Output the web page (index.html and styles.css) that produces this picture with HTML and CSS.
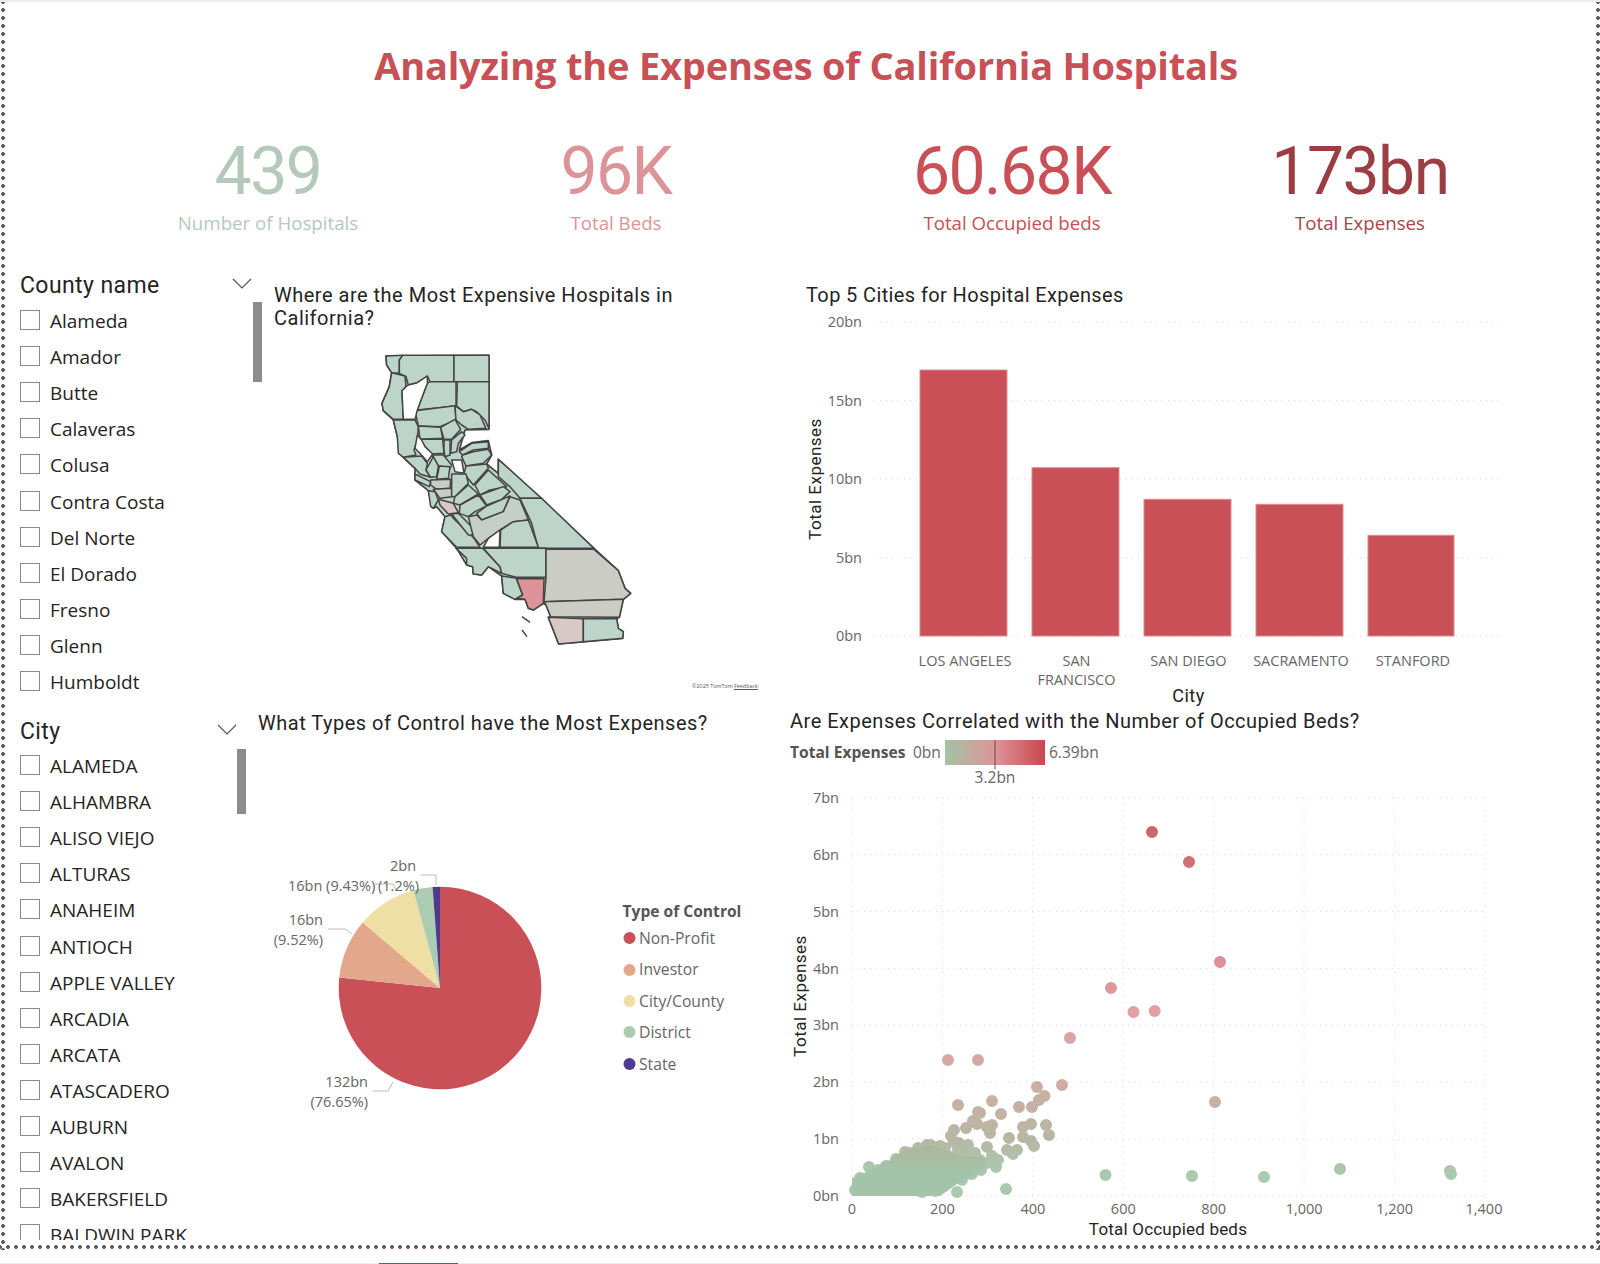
FILE: index.html
```html
<!DOCTYPE html>
<html lang="en">
<head>
<meta charset="utf-8">
<title>Analyzing the Expenses of California Hospitals</title>
<link rel="stylesheet" href="styles.css">
</head>
<body>
<main class="report">
  <h1 class="report-title">Analyzing the Expenses of California Hospitals</h1>

  <section class="kpis">
    <div class="kpi kpi-hospitals"><div class="kpi-value">439</div><div class="kpi-label">Number of Hospitals</div></div>
    <div class="kpi kpi-beds"><div class="kpi-value">96K</div><div class="kpi-label">Total Beds</div></div>
    <div class="kpi kpi-occupied"><div class="kpi-value">60.68K</div><div class="kpi-label">Total Occupied beds</div></div>
    <div class="kpi kpi-expenses"><div class="kpi-value">173bn</div><div class="kpi-label">Total Expenses</div></div>
  </section>

  <section class="row row-top">
    <aside class="slicer">
      <header class="slicer-head">
        <span>County name</span>
        <svg class="chevron" viewBox="0 0 20 11"><path d="M1 1l9 9 9-9"/></svg>
      </header>
      <ul class="slicer-list">
        <li><i class="box"></i>Alameda</li>
        <li><i class="box"></i>Amador</li>
        <li><i class="box"></i>Butte</li>
        <li><i class="box"></i>Calaveras</li>
        <li><i class="box"></i>Colusa</li>
        <li><i class="box"></i>Contra Costa</li>
        <li><i class="box"></i>Del Norte</li>
        <li><i class="box"></i>El Dorado</li>
        <li><i class="box"></i>Fresno</li>
        <li><i class="box"></i>Glenn</li>
        <li><i class="box"></i>Humboldt</li>
      </ul>
    </aside>

    <article class="panel panel-map">
      <i class="scrollbar scrollbar-county"></i>
      <h2 class="visual-title">Where are the Most Expensive Hospitals in California?</h2>
      <svg class="map" viewBox="0 0 960 960" role="img" aria-label="Map of California counties">
        <path class="state-outline" d="M138 48L447 46 447 268 375 270 358 330 395 308 445 302 455 345 440 372 475 400 475 358 762 625 835 692 855 745 872 760 850 778 838 832 830 836 835 865 850 875 848 895 656 912 625 832 632 830 618 795 610 790 580 810 565 805 555 778 525 778 490 760 485 708 445 680 425 705 400 702 398 680 380 675 350 625 305 575 315 530 290 500 280 505 265 452 225 420 225 385 190 352 172 290 160 240 130 212 126 190 148 140 155 98 140 75Z"/>
        <g class="county">
          <path d="M138 48L188 46 178 60 178 100 155 98 140 75Z"/>
          <path d="M188 46L342 46 342 125 270 125 262 108 232 128 205 135 198 110 178 100 178 60Z"/>
          <path d="M342 46L447 46 447 125 342 125Z"/>
          <path d="M155 98L195 108 198 140 186 152 190 238 160 238 130 212 126 190 148 140Z"/>
          <path d="M270 125L348 125 348 198 232 210 245 175 262 130Z"/>
          <path d="M352 125L447 125 447 265 435 240 410 215 395 208 370 215 350 198Z"/>
          <path d="M225 212L345 197 348 240 300 260 235 258Z"/>
          <path d="M345 197L370 215 395 208 420 225 438 265 385 268 365 255 348 240Z"/>
          <path d="M160 240L225 240 235 260 232 300 222 330 228 345 190 352 175 340 172 290Z"/>
          <path d="M235 258L302 262 308 295 240 298Z"/>
          <path d="M302 262L345 238 362 268 335 298 312 298Z"/>
          <path d="M240 298L308 298 312 340 275 342 255 320Z"/>
          <path d="M312 300L330 300 330 345 315 350 312 330Z"/>
          <path d="M335 300L365 275 375 285 355 310 350 335 332 340Z"/>
          <path d="M358 335L395 310 445 305 445 325 400 330 368 345Z"/>
          <path d="M368 345L400 335 445 328 455 345 430 370 378 378 365 350Z"/>
          <path d="M275 345L310 345 335 375 330 385 295 378Z"/>
          <path d="M190 352L245 348 262 370 258 390 272 412 240 402 225 385Z"/>
          <path d="M258 390L280 350 295 378 290 410 272 412Z"/>
          <path d="M378 378L440 372 445 385 400 435 380 410 372 400Z"/>
          <path d="M298 378L330 380 325 415 290 418Z"/>
          <path d="M225 402L272 425 268 440 225 420Z"/>
          <path class="county-mild" d="M272 420L332 418 330 445 290 448 272 435Z"/>
          <path class="county-warm" d="M280 448L335 445 335 470 300 475Z"/>
          <path d="M265 452L285 455 295 480 280 505 272 500Z"/>
          <path d="M335 402L378 402 385 430 345 470 335 470Z"/>
          <path d="M405 435L445 390 500 440 450 450 420 465Z"/>
          <path d="M345 470L385 435 415 462 360 495 340 490Z"/>
          <path d="M420 465L490 440 510 455 485 478 440 495Z"/>
          <path d="M360 495L415 465 440 498 405 515 385 530 358 520Z"/>
          <path d="M410 520L440 498 487 478 510 468 490 515 425 540Z"/>
          <path d="M475 358L605 475 540 475 510 440 475 410Z"/>
          <path d="M540 475L605 475 762 625 595 625 575 550Z"/>
          <path d="M315 530L332 525 345 540 400 592 420 622 350 622 305 575Z"/>
          <path d="M335 522L355 520 395 560 400 585 385 585Z"/>
          <path class="county-mild" d="M385 530L410 525 425 540 490 515 510 470 540 480 565 540 520 545 480 570 445 595 420 615 400 590Z"/>
          <path d="M482 570L520 545 565 540 595 622 480 622Z"/>
          <path d="M348 625L428 625 480 680 485 700 445 680 425 705 400 702 398 680 380 675 380 655Z"/>
          <path d="M430 625L618 625 618 712 528 712 485 700 480 680Z"/>
          <path class="county-warm" d="M618 628L762 628 835 692 855 745 872 760 850 778 612 785 618 712Z"/>
          <path d="M485 708L528 714 548 765 525 778 490 760Z"/>
          <path class="county-hot" d="M530 716L612 716 610 790 580 810 565 805 555 778 530 775 548 765Z"/>
          <path class="county-warm" d="M612 785L850 778 838 832 632 830 618 795Z"/>
          <path class="county-pink" d="M625 832L730 836 730 905 656 912Z"/>
          <path d="M730 836L830 836 835 865 850 875 848 895 730 905Z"/>
          <path class="county-pink" d="M295 478L340 490 355 518 325 522 300 495Z"/>
        </g>
        <g class="county-gap">
          <path d="M198 140L205 135 232 128 262 108 262 130 245 175 232 210 225 238 190 238 186 152Z"/>
          <path d="M232 285L245 300 255 320 278 342 262 365 240 340 225 325Z"/>
          <path d="M335 360L365 360 372 400 345 395Z"/>
          <path d="M445 595L480 570 478 622 430 622Z"/>
        </g>
        <path class="islands" d="M546 830L570 847M546 870L561 890"/>
      </svg>
      <div class="attribution">©2025 TomTom <u>Feedback</u></div>
    </article>

    <article class="panel panel-bars">
      <h2 class="visual-title">Top 5 Cities for Hospital Expenses</h2>
      <svg class="chart chart-bars" viewBox="780 307 820 400" role="img" aria-label="Column chart of total expenses by city">
        <g class="grid-line">
          <path d="M874 322H1500M874 400.6H1500M874 479H1500M874 557.6H1500M874 636H1500"/>
        </g>
        <g class="bar">
          <rect x="920" y="370" width="87" height="266"/>
          <rect x="1032" y="467.7" width="87" height="168.3"/>
          <rect x="1144" y="499.3" width="87" height="136.7"/>
          <rect x="1256" y="504.3" width="87" height="131.7"/>
          <rect x="1368" y="535.3" width="86" height="100.7"/>
        </g>
        <g class="tick tick-end">
          <text x="862" y="327">20bn</text>
          <text x="862" y="406">15bn</text>
          <text x="862" y="484">10bn</text>
          <text x="862" y="563">5bn</text>
          <text x="862" y="641">0bn</text>
        </g>
        <g class="tick tick-mid">
          <text x="965" y="666">LOS ANGELES</text>
          <text x="1076.5" y="666">SAN</text>
          <text x="1076.5" y="685">FRANCISCO</text>
          <text x="1188.5" y="666">SAN DIEGO</text>
          <text x="1301" y="666">SACRAMENTO</text>
          <text x="1413" y="666">STANFORD</text>
        </g>
        <text class="axis-title axis-city" x="1188.5" y="702">City</text>
        <text class="axis-title" transform="translate(821 479) rotate(-90)">Total Expenses</text>
      </svg>
    </article>
  </section>

  <section class="row row-bottom">
    <aside class="slicer slicer-city">
      <header class="slicer-head">
        <span>City</span>
        <svg class="chevron" viewBox="0 0 20 11"><path d="M1 1l9 9 9-9"/></svg>
      </header>
      <ul class="slicer-list">
        <li><i class="box"></i>ALAMEDA</li>
        <li><i class="box"></i>ALHAMBRA</li>
        <li><i class="box"></i>ALISO VIEJO</li>
        <li><i class="box"></i>ALTURAS</li>
        <li><i class="box"></i>ANAHEIM</li>
        <li><i class="box"></i>ANTIOCH</li>
        <li><i class="box"></i>APPLE VALLEY</li>
        <li><i class="box"></i>ARCADIA</li>
        <li><i class="box"></i>ARCATA</li>
        <li><i class="box"></i>ATASCADERO</li>
        <li><i class="box"></i>AUBURN</li>
        <li><i class="box"></i>AVALON</li>
        <li><i class="box"></i>BAKERSFIELD</li>
        <li><i class="box"></i>BALDWIN PARK</li>
      </ul>
    </aside>

    <article class="panel panel-pie">
      <i class="scrollbar scrollbar-city"></i>
      <h2 class="visual-title">What Types of Control have the Most Expenses?</h2>
      <svg class="chart chart-pie" viewBox="237 735 543 505" role="img" aria-label="Pie chart of expenses by type of control">
        <path class="slice-profit" d="M440 988L440 886.7A101.3 101.3 0 1 1 339.3 977.4Z"/>
        <path class="slice-investor" d="M440 988L339.3 977.4A101.3 101.3 0 0 1 362.7 922.5Z"/>
        <path class="slice-city" d="M440 988L362.7 922.5A101.3 101.3 0 0 1 413.4 890.2Z"/>
        <path class="slice-district" d="M440 988L413.4 890.2A101.3 101.3 0 0 1 432.6 887Z"/>
        <path class="slice-state" d="M440 988L432.6 887A101.3 101.3 0 0 1 440 886.7Z"/>
        <path class="leader" d="M421 875H436L436 885M328 929H345L352 934M375 884H393L397 891M373 1091H388L393 1082"/>
        <g class="tick">
          <text x="390" y="871">2bn</text>
          <text x="288" y="891">16bn (9.43%)</text>
          <text x="378" y="891">(1.2%)</text>
          <text class="anchor-end" x="323" y="925">16bn</text>
          <text class="anchor-end" x="323" y="945">(9.52%)</text>
          <text class="anchor-end" x="368" y="1087">132bn</text>
          <text class="anchor-end" x="368" y="1107">(76.65%)</text>
        </g>
        <text class="legend-title" x="622.5" y="917">Type of Control</text>
        <circle class="slice-profit" cx="629.5" cy="938" r="6"/>
        <circle class="slice-investor" cx="629.5" cy="970" r="6"/>
        <circle class="slice-city" cx="629.5" cy="1001" r="6"/>
        <circle class="slice-district" cx="629.5" cy="1032" r="6"/>
        <circle class="slice-state" cx="629.5" cy="1064" r="6"/>
        <g class="legend-item">
          <text x="639" y="944">Non-Profit</text>
          <text x="639" y="975">Investor</text>
          <text x="639" y="1007">City/County</text>
          <text x="639" y="1038">District</text>
          <text x="639" y="1070">State</text>
        </g>
      </svg>
    </article>

    <article class="panel panel-scatter">
      <h2 class="visual-title">Are Expenses Correlated with the Number of Occupied Beds?</h2>
      <svg class="chart chart-scatter" viewBox="780 732 820 508" role="img" aria-label="Scatter chart of expenses against occupied beds">
        <defs>
          <linearGradient id="legend-ramp">
            <stop offset="0" stop-color="#a3c4a3"/>
            <stop offset=".5" stop-color="#dd9499"/>
            <stop offset="1" stop-color="#c8474f"/>
          </linearGradient>
          <linearGradient id="heat" gradientUnits="userSpaceOnUse" x1="0" y1="832" x2="0" y2="1190">
            <stop offset="0" stop-color="#ca5760"/>
            <stop offset=".5" stop-color="#e0979c"/>
            <stop offset=".75" stop-color="#c4a99d"/>
            <stop offset=".86" stop-color="#b0b29c"/>
            <stop offset=".95" stop-color="#a3c4a8"/>
            <stop offset="1" stop-color="#a3c4a8"/>
          </linearGradient>
        </defs>
        <text class="legend-title" x="790" y="758">Total Expenses</text>
        <text class="tick-plain" x="913" y="758">0bn</text>
        <rect x="945" y="740" width="100" height="25" fill="url(#legend-ramp)"/>
        <path class="ramp-mark" d="M995 740V769"/>
        <text class="tick-plain" x="1049" y="758">6.39bn</text>
        <text class="tick-plain anchor-middle" x="995" y="783">3.2bn</text>
        <g class="grid-line">
          <path d="M852 797.7H1485M852 854.6H1485M852 911.4H1485M852 968.3H1485M852 1025H1485M852 1082H1485M852 1139H1485M852 1195.7H1485"/>
          <path d="M852 797.7V1195.7M942.4 797.7V1195.7M1032.9 797.7V1195.7M1123.3 797.7V1195.7M1213.7 797.7V1195.7M1304.1 797.7V1195.7M1394.6 797.7V1195.7M1485 797.7V1195.7"/>
        </g>
        <path class="cluster" d="M852 1196L852 1178 866 1172 890 1160 905 1150 930 1145 945 1150 958 1156 985 1157 985 1170 960 1182 940 1196Z"/>
        <path class="dots" d="M1152 832h0M1189 862h0M1220 962h0M1111 988h0M1133.5 1012h0M1154.7 1011h0M1070 1038h0M948 1060h0M978 1060h0M1062 1085h0M1037 1087h0M1215 1102h0M1044.5 1096h0M1039 1100h0M992 1101h0M958 1105h0M1019 1107h0M1032 1107h0M978 1112h0M980 1113h0M1001 1114h0M973 1121h0M977 1124h0M1031 1124h0M1046 1125h0M1023 1127h0M992 1125h0M987 1127h0M990 1133h0M954 1130h0M966 1128h0M1049 1135h0M1009 1138h0M1023 1137h0M951 1136h0M1031 1141h0M1034 1146h0M954 1142h0M959 1143h0M968 1145h0M987 1147h0M1007 1150h0M1017 1150h0M1013 1154h0M945 1148h0M970.5 1152h0M975 1153h0M992 1156h0M998 1160h0M996 1167h0M981 1170h0M987 1163h0M967 1174h0M957 1192h0M1006 1189h0M1105.5 1175h0M1192 1176h0M1264 1177h0M1340 1169h0M1450 1171h0M1451 1174h0M869 1167h0M905 1152h0M910 1153h0M927 1145h0M930.6 1145h0M918 1148h0M896 1159h0M886 1166h0M878 1170h0M860 1178h0M858 1184h0M855 1190h0M936 1152h0M948 1156h0M956 1158h0M962 1165h0M972 1163h0M955 1172h0M950 1180h0M942 1186h0M935 1191h0M922 1192h0M962 1180h0M972 1174h0M925 1160h0M938 1168h0M910 1170h0M895 1178h0M915 1180h0M880 1185h0M900 1190h0M868 1190h0M930 1178h0M914 1160h0M904 1163h0M932 1155h0M944 1162h0M952 1166h0M966 1158h0M980 1160h0M978 1166h0M970 1170h0M964 1174h0M946 1172h0M940 1178h0M958 1150h0M964 1148h0M940 1146h0"/>
        <g class="tick tick-end">
          <text x="839" y="803">7bn</text>
          <text x="839" y="860">6bn</text>
          <text x="839" y="916.5">5bn</text>
          <text x="839" y="973.5">4bn</text>
          <text x="839" y="1030">3bn</text>
          <text x="839" y="1087">2bn</text>
          <text x="839" y="1143.5">1bn</text>
          <text x="839" y="1200.5">0bn</text>
        </g>
        <g class="tick tick-mid">
          <text x="852" y="1214">0</text>
          <text x="942.4" y="1214">200</text>
          <text x="1032.9" y="1214">400</text>
          <text x="1123.3" y="1214">600</text>
          <text x="1213.7" y="1214">800</text>
          <text x="1304.1" y="1214">1,000</text>
          <text x="1394.6" y="1214">1,200</text>
          <text x="1484" y="1214">1,400</text>
        </g>
        <text class="axis-title axis-beds" x="1168" y="1235">Total Occupied beds</text>
        <text class="axis-title" transform="translate(806 996) rotate(-90)">Total Expenses</text>
      </svg>
    </article>
  </section>
</main>
<footer class="statusbar"><i class="active-tab"></i></footer>
</body>
</html>
```
FILE: styles.css
```css
* { box-sizing: border-box; }
html, body { margin: 0; padding: 0; background: #fff; }
body { width: 1600px; height: 1264px; overflow: hidden; font-family: "Open Sans", "Noto Sans", sans-serif; }

.report {
  height: 1250px;
  border-top: 2px solid #ececec;
  margin-bottom: 13px;
  background-image:
    radial-gradient(circle 2.2px at 4px 4px, #5f5f5f 75%, transparent 100%),
    radial-gradient(circle 2.2px at 4px 4px, #5f5f5f 75%, transparent 100%),
    radial-gradient(circle 2.2px at 4px 4px, #5f5f5f 75%, transparent 100%);
  background-size: 8px 8px;
  background-repeat: repeat-y, repeat-y, repeat-x;
  background-position: -1px 4px, 1594px 4px, 4px 1241px;
}

.report-title {
  margin: 0;
  height: 128px;
  padding-top: 36px;
  padding-left: 12px;
  text-align: center;
  font-size: 38px;
  line-height: 54px;
  letter-spacing: -.2px;
  font-weight: 700;
  color: #c85056;
}

.kpis { display: flex; gap: 48px; height: 140px; padding-left: 118px; }
.kpi { width: 300px; text-align: center; }
.kpi-occupied { margin-left: 48px; }
.kpi-value {
  font-family: Roboto, sans-serif;
  font-size: 66px;
  line-height: 76px;
  letter-spacing: -1.5px;
  margin-top: 4px;
}
.kpi-label { font-size: 18.7px; line-height: 24px; margin-top: 1px; }
.kpi-hospitals { color: #b5c9bb; }
.kpi-beds { color: #dd9499; }
.kpi-occupied { color: #c85056; }
.kpi-expenses { color: #9b3d42; }
.kpi-expenses .kpi-label { color: #a9444b; }

.row { display: grid; }
.row-top { grid-template-columns: 252px 528px 820px; height: 439px; }
.row-bottom { grid-template-columns: 237px 543px 820px; height: 531px; }

.slicer { padding-left: 20px; overflow: hidden; }
.slicer-city { padding-top: 7px; }
.slicer-head {
  display: flex;
  justify-content: space-between;
  align-items: center;
  height: 30px;
  font-family: Roboto, sans-serif;
  font-size: 23px;
  letter-spacing: .4px;
  color: #252423;
}
.chevron { width: 20px; height: 11px; margin-top: -4px; fill: none; stroke: #555; stroke-width: 1.2; }
.slicer-list { list-style: none; margin: 3px 0 0; padding: 0; }
.slicer-city .slicer-list { margin-top: 2px; }
.slicer-list li {
  display: flex;
  align-items: center;
  height: 36.1px;
  font-size: 19px;
  color: #252423;
  white-space: nowrap;
}
.box { width: 20px; height: 20px; margin-right: 10px; border: 1.5px solid #8a8a8a; flex: none; margin-top: -2px; }

.panel { position: relative; }
.panel-map { padding: 14px 0 0 22px; }
.panel-bars { padding: 14px 0 0 26px; }
.panel-pie { padding: 3px 0 0 21px; }
.panel-scatter { padding: 1px 0 0 10px; }
.panel-bars .chart { margin-left: -26px; }
.panel-scatter .chart { margin: -1px 0 0 -10px; }
.panel-pie .chart { margin-left: -21px; }
.scrollbar { position: absolute; width: 9px; background: #8c8c8c; }
.scrollbar-county { left: 1px; top: 32px; height: 80px; }
.scrollbar-city { left: 0; top: 40px; height: 65px; }

.visual-title {
  margin: 0;
  font-family: Roboto, sans-serif;
  font-size: 20px;
  line-height: 23px;
  font-weight: 400;
  letter-spacing: .5px;
  color: #252423;
  max-width: 430px;
}
.panel-bars .visual-title { letter-spacing: .38px; }
.panel-bars .visual-title, .panel-pie .visual-title, .panel-scatter .visual-title { max-width: none; }

.map { display: block; width: 320px; height: 320px; margin: 10px 0 0 66px; }
.state-outline { fill: #bdd4c8; stroke: #444; stroke-width: 5; stroke-linejoin: round; }
.county path { fill: #bdd4c8; stroke: #444; stroke-width: 4.5; stroke-linejoin: round; }
.county .county-mild { fill: #c6cfc7; }
.county .county-warm { fill: #cbccc4; }
.county .county-pink { fill: #d8c8c6; }
.county .county-hot { fill: #dd9499; }
.county-gap path { fill: #fff; stroke: #444; stroke-width: 4.5; stroke-linejoin: round; }
.islands { fill: none; stroke: #444; stroke-width: 4.5; }
.attribution { margin: 22px 0 0 418px; font-size: 5.4px; line-height: 8px; color: #555; white-space: nowrap; }

.chart { display: block; }
.chart-bars { width: 820px; height: 400px; }
.chart-pie { width: 543px; height: 505px; }
.chart-scatter { width: 820px; height: 508px; }
.chart text { font-family: "Open Sans", "Noto Sans", sans-serif; }

.grid-line path { fill: none; stroke: #d4d4d4; stroke-width: 1; stroke-dasharray: 1 5; }
.bar rect { fill: #c85056; stroke: #dd8a90; stroke-width: 1; }

.tick text, .tick-plain { font-size: 14.5px; fill: #666; }
.tick-plain { font-size: 15.5px; }
.tick-end text { text-anchor: end; }
.tick-mid text { text-anchor: middle; }
.tick .anchor-end { text-anchor: end; }
.anchor-middle { text-anchor: middle; }
.chart .axis-title { font-family: Roboto, sans-serif; font-size: 17px; letter-spacing: .5px; fill: #252423; text-anchor: middle; }
.chart .axis-city { font-size: 18px; }
.chart .axis-beds { letter-spacing: .2px; }

.slice-profit { fill: #c85056; }
.slice-investor { fill: #e3a78c; }
.slice-city { fill: #eee0a4; }
.slice-district { fill: #acccb2; }
.slice-state { fill: #503a90; }
.leader { fill: none; stroke: #bbb; stroke-width: 1; }
.legend-title { font-size: 15.6px; font-weight: 700; fill: #555; }
.legend-item text { font-size: 15.7px; fill: #666; }

.ramp-mark { stroke: #555; stroke-width: 1; }
.cluster { fill: url(#heat); }
.dots { fill: none; stroke: url(#heat); stroke-width: 12; stroke-linecap: round; opacity: .92; }

.statusbar { height: 1px; background: #ececec; }
.active-tab { display: block; width: 79px; height: 1px; margin-left: 379px; background: #2c7a5c; }
```
